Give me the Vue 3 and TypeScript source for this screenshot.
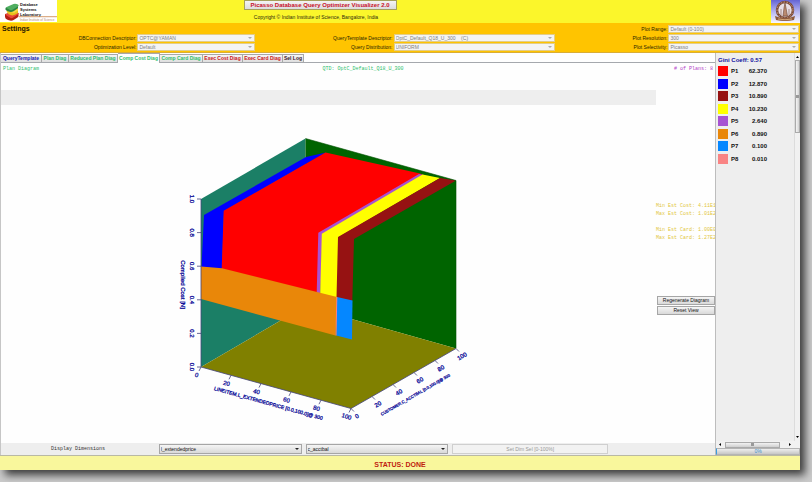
<script setup lang="ts">
import { ref } from 'vue'

interface Field {
  id: string
  label: string
  value: string
  area: string
}

interface Tab {
  name: string
  tone: 'blue' | 'green' | 'red' | 'dark'
  width: number
}

interface Plan {
  name: string
  share: string
  color: string
}

interface Tick {
  text: string
  x: number
  y: number
  tx: number
  ty: number
}

const fields: Field[] = [
  { id: 'connection', label: 'DBConnection Descriptor:', value: 'OPTC@YAMAN', area: 'left second' },
  { id: 'level', label: 'Optimization Level:', value: 'Default', area: 'left third' },
  { id: 'template', label: 'QueryTemplate Descriptor:', value: 'OptC_Default_Q18_U_300\u00a0\u00a0\u00a0\u00a0(C)', area: 'middle second' },
  { id: 'distribution', label: 'Query Distribution:', value: 'UNIFORM', area: 'middle third' },
  { id: 'range', label: 'Plot Range:', value: 'Default (0-100)', area: 'right first' },
  { id: 'resolution', label: 'Plot Resolution:', value: '300', area: 'right second' },
  { id: 'selectivity', label: 'Plot Selectivity:', value: 'Picasso', area: 'right third' },
]

const tabs: Tab[] = [
  { name: 'QueryTemplate', tone: 'blue', width: 41 },
  { name: 'Plan Diag', tone: 'green', width: 27 },
  { name: 'Reduced Plan Diag', tone: 'green', width: 49 },
  { name: 'Comp Cost Diag', tone: 'green', width: 42 },
  { name: 'Comp Card Diag', tone: 'green', width: 43 },
  { name: 'Exec Cost Diag', tone: 'red', width: 40 },
  { name: 'Exec Card Diag', tone: 'red', width: 40 },
  { name: 'Sel Log', tone: 'dark', width: 21 },
]
const activeTab = ref('Comp Cost Diag')

const plans: Plan[] = [
  { name: 'P1', share: '62.370', color: '#ff0000' },
  { name: 'P2', share: '12.870', color: '#0000ff' },
  { name: 'P3', share: '10.890', color: '#961212' },
  { name: 'P4', share: '10.230', color: '#ffff00' },
  { name: 'P5', share: '2.640', color: '#a752d2' },
  { name: 'P6', share: '0.890', color: '#e98709' },
  { name: 'P7', share: '0.100', color: '#0587ff' },
  { name: 'P8', share: '0.010', color: '#f98484' },
]

const costTicks: Tick[] = ['0.0', '0.2', '0.4', '0.6', '0.8', '1.0'].map((text, i) => ({
  text,
  x: 201,
  y: 367 - i * 33.6,
  tx: 190,
  ty: 367 - i * 33.6,
}))

const priceTicks: Tick[] = ['0', '20', '40', '60', '80', '100'].map((text, i) => ({
  text,
  x: 201 + i * 30,
  y: 367 + i * 8.3,
  tx: 196 + i * 30,
  ty: 377 + i * 8.3,
}))

const balanceTicks: Tick[] = ['0', '20', '40', '60', '80', '100'].map((text, i) => ({
  text,
  x: 351 + i * 21,
  y: 408.5 - i * 12,
  tx: 358 + i * 21,
  ty: 418 - i * 12,
}))

const firstDimension = ref('l_extendedprice')
const secondDimension = ref('c_acctbal')
</script>

<template>
  <div class="desktop">
    <div class="window">
      <header class="banner">
        <svg class="lab-logo" viewBox="0 0 57 22" role="img" aria-label="Database Systems Laboratory">
          <rect width="57" height="22" fill="#fff" />
          <path d="M5 14v3q0 2 3 3l2 .6q2 .4 4-.8l3.500-2.300q1.500-1 1-2.500v-2l-6-1z" fill="#b51f14" />
          <path d="M5 14.500l7-3 6.500 1.500v1l-6 4-1.500.3z" fill="#e9483a" />
          <path d="M6.500 11l1 2q1 1.500 3 2l2 .4q1.500 0 3-.8l2.500-1.600v-3z" fill="#e7c21c" />
          <path d="M6 8.500l5-1.500 7 1.500v2l-4 2.500-7-2z" fill="#f6d746" />
          <path d="M5.500 8v1.800q1 1.200 3 1.700l2 .5q1.500.2 3-.7l4.500-3V5z" fill="#2b8440" />
          <path d="M5.500 7.500l8-3.500q1.500-.3 3 0l1.500.6q1.500.8 0 2l-5 3q-1.500.8-3 .4z" fill="#4fae60" />
          <g font-family="'Liberation Sans', sans-serif" font-size="4" font-weight="bold" fill="#111">
            <text x="20" y="6">Database</text>
            <text x="20" y="11">Systems</text>
            <text x="20" y="15.500">Laboratory</text>
          </g>
          <path d="M19 16.700h38" stroke="#c2702c" stroke-width=".7" />
          <text x="20" y="20.500" font-family="'Liberation Sans', sans-serif" font-size="3" fill="#b78a70">Indian Institute of Science</text>
        </svg>
        <div class="heading">
          <button class="title" type="button">Picasso Database Query Optimizer Visualizer 2.0</button>
          <p class="copyright">Copyright © Indian Institute of Science, Bangalore, India</p>
        </div>
        <svg class="crest" viewBox="0 0 29 23" role="img" aria-label="Indian Institute of Science">
          <defs>
            <linearGradient id="sky" x1="0" y1="0" x2="0" y2="1">
              <stop offset="0" stop-color="#6464d4" />
              <stop offset="0.500" stop-color="#b4b4f0" />
              <stop offset="1" stop-color="#f8f8ff" />
            </linearGradient>
          </defs>
          <rect width="29" height="23" fill="url(#sky)" />
          <circle cx="14" cy="10" r="8" fill="#e8dfe6" stroke="#7a4a3a" stroke-width="2.500" />
          <circle cx="14" cy="10" r="8" fill="none" stroke="#d0a080" stroke-width="1" stroke-dasharray="1.500 1.500" />
          <path d="M12 16l1-8 1-5 1 5 1.500 8z" fill="#b98a70" stroke="#6c4538" stroke-width=".6" />
          <path d="M10 15V9M18 15V9" stroke="#a78b88" />
          <path d="M4 16q4 2 10 2t10-2l-1 4q-9 2-18 0z" fill="#8e5a3c" />
          <path d="M7 19q7 1.500 14 0" fill="none" stroke="#e3bb8c" stroke-width=".8" />
        </svg>
      </header>

      <section class="settings">
        <h2>Settings</h2>
        <template v-for="f in fields" :key="f.id">
          <label :for="f.id" :class="f.area">{{ f.label }}</label>
          <span class="combo pale" :class="f.area">
            <select :id="f.id" disabled>
              <option>{{ f.value }}</option>
            </select>
          </span>
        </template>
      </section>

      <main class="body">
        <div class="workspace">
          <nav class="tabs">
            <button
              v-for="t in tabs"
              :key="t.name"
              type="button"
              class="tab"
              :class="[t.tone, { active: t.name === activeTab }]"
              :style="{ width: t.width + 'px' }"
              @click="activeTab = t.name"
            >
              {{ t.name }}
            </button>
          </nav>

          <div class="panel">
            <div class="caption">
              <span class="green">Plan Diagram</span>
              <span class="green">QTD: OptC_Default_Q18_U_300</span>
              <span class="violet"># of Plans: 8</span>
            </div>
            <div class="canvas">
              <div class="plot">
                <div class="strip"></div>
                <svg class="chart" viewBox="1 105 655 338" role="img" aria-label="Compiled cost diagram">
                  <g shape-rendering="geometricPrecision">
                    <polygon points="201,199 305.5,138.500 305.5,306 201,367" fill="#1b7f66" />
                    <polygon points="305.5,138.500 456,180.500 456,348.500 305.5,306" fill="#006400" />
                    <polygon points="201,367 305.5,306 456,348.500 351,408.500" fill="#808000" />
                    <polygon points="204,215 306,157 326,152.500 224,211 222,269 201.5,267" fill="#0000ff" />
                    <polygon points="223.7,210.700 325.5,152.500 420,173.500 423,175 320,235 319,294 221.7,269" fill="#ff0000" />
                    <polygon points="318.3,232.700 419,174 424,175 322.5,234 320.5,294.500 316.7,293" fill="#a752d2" />
                    <polygon points="321.8,233.700 422.5,174.500 440,178 339,237 337.5,298 320.2,294" fill="#ffff00" />
                    <polygon points="338,237 440,178 456,180.500 354,239 352.3,301 336.5,298" fill="#961212" />
                    <polygon points="201,266.500 222,268.300 337,297 335.5,335.500 201,299" fill="#e98709" />
                    <polygon points="337,297 352.5,300.500 352,339.500 336.2,335.500" fill="#0587ff" />
                    <path d="M336.800 297L336 335.500" stroke="#f98484" />
                    <path d="M305.500 138.500L456 180.500V348.500" fill="none" stroke="#005000" stroke-width=".6" />
                  </g>
                  <g stroke="#44447c" stroke-width=".8">
                    <path d="M201 199V367L351 408.500L456 348.500" fill="none" />
                    <path v-for="t in costTicks" :key="t.text" :d="`M${t.x} ${t.y}h-4`" />
                    <path v-for="t in priceTicks" :key="t.text" :d="`M${t.x} ${t.y}l-2 4`" />
                    <path v-for="t in balanceTicks" :key="t.text" :d="`M${t.x} ${t.y}l3 3`" />
                  </g>
                  <g class="axis">
                    <text v-for="t in costTicks" :key="t.text" :transform="`translate(${t.tx} ${t.ty}) rotate(90)`">{{ t.text }}</text>
                    <text v-for="t in priceTicks" :key="t.text" :transform="`translate(${t.tx} ${t.ty}) rotate(16)`">{{ t.text }}</text>
                    <text v-for="t in balanceTicks" :key="t.text" :transform="`translate(${t.tx} ${t.ty}) rotate(-30)`">{{ t.text }}</text>
                    <text transform="translate(181 284.500) rotate(90)">Compiled Cost [N]</text>
                    <text class="medium" transform="translate(268 405) rotate(15.500)">LINEITEM.L_EXTENDEDPRICE [0.0,100.0]@ 300</text>
                    <text class="small" transform="translate(416 396) rotate(-30)">CUSTOMER.C_ACCTBAL [0.0,100.0]@ 300</text>
                  </g>
                </svg>
              </div>
              <aside class="readout">
                <pre>Min Est Cost: 4.11E1
Max Est Cost: 1.01E2

Min Est Card: 1.00E0
Max Est Card: 1.27E2</pre>
                <button type="button" class="raised">Regenerate Diagram</button>
                <button type="button" class="raised">Reset View</button>
              </aside>
            </div>
            <div class="dimensions">
              <span id="dimensions-label">Display Dimensions</span>
              <span class="combo raised">
                <select v-model="firstDimension" aria-labelledby="dimensions-label">
                  <option>l_extendedprice</option>
                  <option>c_acctbal</option>
                </select>
              </span>
              <span class="combo raised">
                <select v-model="secondDimension" aria-labelledby="dimensions-label">
                  <option>l_extendedprice</option>
                  <option>c_acctbal</option>
                </select>
              </span>
              <button type="button" class="flat" disabled>Set Dim Sel [0-100%]</button>
            </div>
          </div>
        </div>

        <aside class="side">
          <div class="scroller">
            <div class="legend">
              <h3>Gini Coeff: 0.57</h3>
              <ul>
                <li v-for="p in plans" :key="p.name">
                  <i class="swatch" :style="{ background: p.color }"></i>
                  <span>{{ p.name }}</span>
                  <span class="share">{{ p.share }}</span>
                </li>
              </ul>
            </div>
            <div class="vbar">
              <svg viewBox="0 0 5 4"><path d="M1 3L2.500 1L4 3z" /></svg>
              <div class="thumb"><i></i></div>
              <svg viewBox="0 0 5 4"><path d="M1 1L2.500 3L4 1z" /></svg>
            </div>
          </div>
          <div class="hbar">
            <svg viewBox="0 0 4 5"><path d="M3 1L1 2.500L3 4z" /></svg>
            <div class="thumb"><i></i></div>
            <svg viewBox="0 0 4 5"><path d="M1 1L3 2.500L1 4z" /></svg>
          </div>
          <div class="progress" role="progressbar" aria-valuenow="0">0%</div>
        </aside>
      </main>

      <footer class="status">STATUS: DONE</footer>
    </div>
  </div>
</template>

<style>
body {
  margin: 0;
}
</style>

<style scoped>
* {
  box-sizing: border-box;
}

.desktop {
  display: flex;
  min-height: 100vh;
  padding: 0 12px 12px 0;
  overflow: hidden;
  background: #cbcbcb;
  font-family: "Liberation Sans", Arial, sans-serif;
  font-size: 6px;
  line-height: 8px;
  color: #222;
}

.window {
  flex: 1;
  min-width: 0;
  display: flex;
  flex-direction: column;
  background: #fefefe;
  box-shadow: 5px 5px 8px 0 rgba(0, 0, 0, 0.7);
}

h2,
h3,
p,
ul,
pre {
  margin: 0;
  padding: 0;
}

button,
select {
  font: inherit;
  color: inherit;
  margin: 0;
  padding: 0;
  border-radius: 0;
}

.banner {
  display: grid;
  grid-template-columns: 57px 1fr 188px 29px;
  height: 23px;
  background: #fbf62b;
}

.lab-logo {
  width: 57px;
  height: 22px;
}

.heading {
  display: flex;
  flex-direction: column;
  align-items: center;
  gap: 3px;
}

.title {
  width: 153px;
  height: 10px;
  border: 1px solid #a5a05c;
  background: linear-gradient(#f4f4f4, #dcdcdc);
  font-weight: bold;
  line-height: 8px;
  color: #c8102a;
  white-space: nowrap;
}

.copyright {
  margin-right: 8px;
  font-size: 5px;
  color: #2e2a0c;
}

.crest {
  grid-column: 4;
  width: 29px;
  height: 23px;
}

.settings {
  display: grid;
  grid-template-columns: 137fr 118fr 137fr 162fr 112fr 131fr;
  grid-template-rows: repeat(3, 8px);
  gap: 1px;
  padding: 2px 1px 1px 0;
  background: #ffc400;
  border-bottom: 1px solid #d9ad35;
}

.settings h2 {
  grid-area: 1 / 1;
  padding-left: 2px;
  font-size: 7px;
  line-height: 8px;
  color: #1c1400;
}

.settings label {
  text-align: right;
  font-size: 5px;
  color: #2a1f00;
}

.first {
  grid-row: 1;
}

.second {
  grid-row: 2;
}

.third {
  grid-row: 3;
}

label.left {
  grid-column: 1;
}

.combo.left {
  grid-column: 2;
}

label.middle {
  grid-column: 3;
}

.combo.middle {
  grid-column: 4;
}

label.right {
  grid-column: 5;
}

.combo.right {
  grid-column: 6;
}

.combo {
  display: grid;
  align-items: center;
}

.combo select {
  grid-area: 1 / 1;
  width: 100%;
  height: 100%;
  padding: 0 8px 0 1px;
  border: 0;
  appearance: none;
  background: transparent;
  font-size: 5px;
  line-height: 6px;
  opacity: 1;
}

.combo::after {
  content: "";
  grid-area: 1 / 1;
  justify-self: end;
  margin-right: 2px;
  border: 2px solid transparent;
  border-top: 2px solid #222;
  border-bottom: 0;
  pointer-events: none;
}

.pale {
  border: 1px solid #e3cd88;
  background: #f4f4f4;
  color: #808080;
}

.pale::after {
  border-top-color: #aaa;
}

.body {
  flex: 1;
  display: grid;
  grid-template-columns: 1fr 85px;
}

.workspace {
  display: flex;
  flex-direction: column;
  min-width: 0;
  border-left: 1px solid #c6c6c6;
}

.tabs {
  display: flex;
  align-items: flex-end;
  height: 10px;
  border-bottom: 1px solid #a5a8ad;
}

.tab {
  height: 8px;
  border: 1px solid #a8a8a8;
  border-left-width: 0;
  border-bottom: 0;
  background: linear-gradient(#f6f6f6, #dedede);
  font-size: 5px;
  font-weight: bold;
  line-height: 7px;
  white-space: nowrap;
}

.tab.active {
  height: 10px;
  margin-bottom: -1px;
  background: #fefefe;
}

.blue {
  color: #1818b0;
}

.green {
  color: #2fbe6c;
}

.red {
  color: #cc1420;
}

.dark {
  color: #402028;
}

.violet {
  color: #b33cc8;
}

.panel {
  flex: 1;
  display: flex;
  flex-direction: column;
  font-family: "Liberation Mono", "Courier New", monospace;
}

.caption {
  display: grid;
  grid-template-columns: 321fr 81fr 311fr;
  height: 27px;
  padding: 2px 2px 0;
  font-size: 5px;
  line-height: 8px;
  white-space: nowrap;
}

.caption .violet {
  text-align: right;
}

.canvas {
  flex: 1;
  display: grid;
  grid-template-columns: 1fr 59px;
}

.plot {
  display: flex;
  flex-direction: column;
}

.strip {
  height: 15px;
  background: #eee;
}

.chart {
  display: block;
  width: 100%;
}

.axis {
  font-family: "Liberation Sans", Arial, sans-serif;
  font-size: 6px;
  fill: #10109a;
  stroke: #10109a;
  stroke-width: 0.3px;
  text-anchor: middle;
}

.axis .medium {
  font-size: 5px;
}

.axis .small {
  font-size: 4px;
}

.readout {
  display: flex;
  flex-direction: column;
  gap: 1px;
  padding: 112px 0 0 0;
  font-size: 5px;
}

.readout pre {
  height: 93px;
  font-family: inherit;
  line-height: 8px;
  color: #e2c63c;
}

.readout button {
  height: 9px;
  margin-left: 1px;
  font-family: "Liberation Sans", Arial, sans-serif;
  line-height: 7px;
}

.raised {
  border: 1px solid #a6a6a6;
  background: linear-gradient(#f5f5f5, #d9d9d9);
  color: #111;
}

.dimensions {
  display: grid;
  grid-template-columns: 154fr 143fr 143fr 156fr 103fr;
  column-gap: 4px;
  height: 12px;
  padding: 1px 0;
  background: #eee;
  font-size: 5px;
  line-height: 10px;
}

.dimensions > span:first-child {
  text-align: center;
  color: #333;
}

.dimensions select,
.dimensions button {
  font-family: "Liberation Sans", Arial, sans-serif;
}

.flat {
  border: 1px solid #cfcfcf;
  background: #f2f2f2;
  color: #999;
  line-height: 8px;
}

.side {
  display: flex;
  flex-direction: column;
  border-left: 1px solid #bdbdbd;
  background: #eee;
}

.scroller {
  flex: 1;
  display: flex;
  justify-content: space-between;
}

.legend {
  padding: 3px 0 0 2px;
  font-weight: bold;
  color: #111;
}

.legend h3 {
  font-size: 6px;
  line-height: 8px;
  color: #1010a0;
  white-space: nowrap;
}

.legend ul {
  display: grid;
  align-content: space-between;
  height: 101px;
  padding-top: 2px;
  list-style: none;
}

.legend li {
  display: grid;
  grid-template-columns: 10px 8px 25px;
  column-gap: 3px;
  line-height: 11px;
}

.swatch {
  width: 10px;
  height: 10px;
}

.share {
  text-align: right;
}

.vbar {
  display: flex;
  flex-direction: column;
  width: 6px;
  padding: 2px 0;
  border-left: 1px solid #dcdcdc;
  background: #f1f1f1;
}

.vbar svg {
  width: 5px;
  height: 4px;
}

.vbar .thumb {
  height: 73px;
  margin-top: 1px;
  margin-bottom: auto;
}

.thumb {
  display: grid;
  place-items: center;
  border: 1px solid #aaa;
  background: linear-gradient(90deg, #f5f5f5, #d2d2d2);
}

.thumb i {
  width: 3px;
  height: 3px;
  background: #999;
}

.hbar {
  display: flex;
  align-items: center;
  justify-content: space-between;
  height: 7px;
  padding: 0 8px 0 2px;
  background: #f1f1f1;
}

.hbar svg {
  width: 4px;
  height: 5px;
}

.hbar .thumb {
  width: 55px;
  height: 6px;
  margin-right: 6px;
  background: linear-gradient(#f2f2f2, #cfcfcf);
}

.progress {
  height: 7px;
  border: 1px solid #b4b4b4;
  border-left: 1px solid #3a9ce0;
  background: linear-gradient(#eee, #c6c6c6);
  font-size: 5px;
  line-height: 5px;
  text-align: center;
  color: #3a90cc;
}

.status {
  height: 15px;
  border-top: 1px solid #b9b9a4;
  background: #f9f79c;
  font-size: 7px;
  font-weight: bold;
  line-height: 18px;
  text-align: center;
  color: #c01c10;
}
</style>
